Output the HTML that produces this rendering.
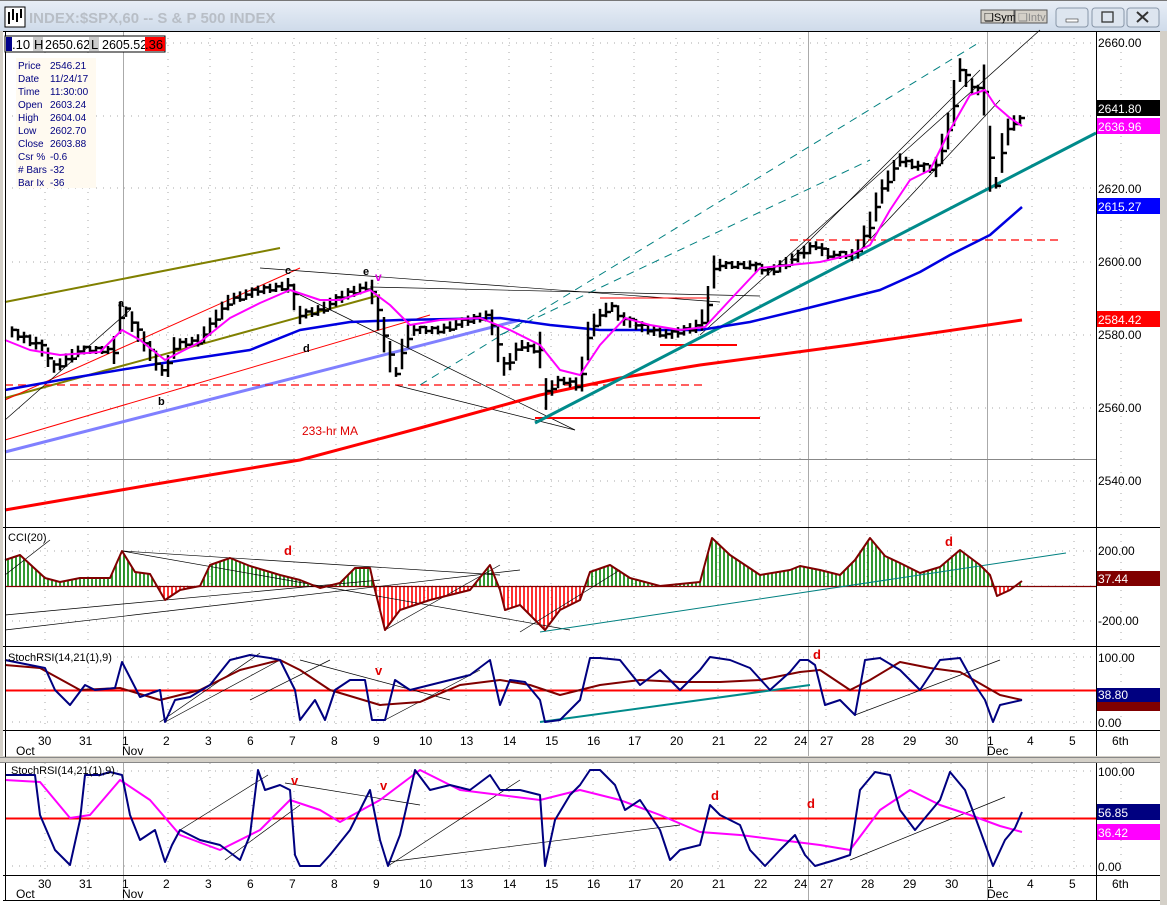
<!DOCTYPE html>
<html><head><meta charset="utf-8"><style>
body{margin:0;width:1167px;height:905px;overflow:hidden;background:#fff;font-family:"Liberation Sans",sans-serif}
svg{position:absolute;left:0;top:0}
</style></head><body>
<svg id="s" width="1167" height="905" xmlns="http://www.w3.org/2000/svg" font-family="Liberation Sans, sans-serif">
<defs><linearGradient id="tb" x1="0" y1="0" x2="0" y2="1"><stop offset="0" stop-color="#e8eef6"/><stop offset="1" stop-color="#cfdbea"/></linearGradient></defs>
<rect width="1167" height="905" fill="#fff"/>
<rect x="0" y="0" width="1167" height="31" fill="url(#tb)"/>
<rect x="0" y="0" width="1167" height="1" fill="#777"/>
<rect x="5" y="7" width="20" height="20" fill="#fff" stroke="#000"/>
<path d="M9 24V12M13 20V9M17 22V13M21 18V9" stroke="#000" stroke-width="2"/>
<text x="29" y="23" font-size="15" font-weight="bold" fill="#b8bec6">INDEX:$SPX,60 -- S &amp; P 500 INDEX</text>
<rect x="981" y="10" width="33" height="13" fill="#d4d0c8" stroke="#555"/><text x="984" y="21" font-size="11">❑Sym</text>
<rect x="1015" y="10" width="32" height="13" fill="#d4d0c8" stroke="#555"/><text x="1018" y="21" font-size="11" fill="#888">❑Intv</text>
<rect x="1056" y="8" width="32" height="19" rx="3" fill="#dde5ef" stroke="#8896a8"/><rect x="1066" y="19" width="12" height="3" fill="#fff" stroke="#333" stroke-width=".6"/>
<rect x="1092" y="8" width="32" height="19" rx="3" fill="#dde5ef" stroke="#8896a8"/><rect x="1102" y="12" width="11" height="10" fill="none" stroke="#333" stroke-width="1.3"/>
<rect x="1127" y="8" width="32" height="19" rx="3" fill="#dde5ef" stroke="#8896a8"/><path d="M1137 12l11 10M1148 12l-11 10" stroke="#333" stroke-width="2"/>
<rect x="1160" y="31" width="7" height="874" fill="#d4d0c8"/>
<rect x="0" y="31" width="3" height="730" fill="#d4d0c8"/>
<g id="grid"></g>
<g id="dr"></g>
<path d="M3 31.5H1160M3 527.5H1160M3 646.5H1160M3 730.5H1160M1096.5 31V757M1096.5 763V900M3 875.5H1160M3 900.5H1160" stroke="#000" stroke-width="1" fill="none"/>
<rect x="0" y="756" width="1167" height="7" fill="#d4d0c8"/>
<path d="M0 757.5H1160M0 762.5H1160" stroke="#888"/>
<path d="M5.5 763V900M5.5 31V757" stroke="#000"/>
<g font-size="13">
<rect x="5" y="36" width="160" height="16" fill="#fff" stroke="#000"/>
<rect x="6" y="37" width="6" height="14" fill="#00008b"/>
<text x="12" y="49">.10</text><rect x="33" y="37" width="10" height="14" fill="#ccc"/><text x="34" y="49">H</text>
<text x="45" y="49" font-size="12.5">2650.62</text><rect x="89" y="37" width="10" height="14" fill="#ccc"/><text x="91" y="49">L</text>
<text x="102" y="49" font-size="12.5">2605.52</text><rect x="145" y="37" width="20" height="14" fill="#f00"/><text x="145" y="49">.36</text>
</g>
<rect x="16" y="58" width="80" height="130" fill="#fffaf0"/>
<g font-size="10" fill="#000080">
<text x="18" y="69">Price</text><text x="50" y="69">2546.21</text>
<text x="18" y="82">Date</text><text x="50" y="82">11/24/17</text>
<text x="18" y="95">Time</text><text x="50" y="95">11:30:00</text>
<text x="18" y="108">Open</text><text x="50" y="108">2603.24</text>
<text x="18" y="121">High</text><text x="50" y="121">2604.04</text>
<text x="18" y="134">Low</text><text x="50" y="134">2602.70</text>
<text x="18" y="147">Close</text><text x="50" y="147">2603.88</text>
<text x="18" y="160">Csr %</text><text x="50" y="160">-0.6</text>
<text x="18" y="173"># Bars</text><text x="50" y="173">-32</text>
<text x="18" y="186">Bar Ix</text><text x="50" y="186">-36</text>
</g>
<g font-size="12">
<text x="1098" y="47">2660.00</text>
<rect x="1097" y="100" width="63" height="16" fill="#000"/><text x="1098" y="113" fill="#fff">2641.80</text>
<rect x="1097" y="118" width="63" height="16" fill="#f0f"/><text x="1098" y="131" fill="#fff">2636.96</text>
<text x="1098" y="193">2620.00</text>
<rect x="1097" y="198" width="63" height="16" fill="#00f"/><text x="1098" y="211" fill="#fff">2615.27</text>
<text x="1098" y="266">2600.00</text>
<rect x="1097" y="311" width="63" height="16" fill="#f00"/><text x="1098" y="324" fill="#fff">2584.42</text>
<text x="1098" y="339">2580.00</text>
<text x="1098" y="412">2560.00</text>
<text x="1098" y="485">2540.00</text>
<text x="1098" y="555">200.00</text>
<rect x="1097" y="571" width="63" height="15" fill="#800000"/><text x="1098" y="583" fill="#fff">37.44</text>
<text x="1098" y="625">-200.00</text>
<text x="1098" y="662">100.00</text>
<rect x="1097" y="688" width="63" height="14" fill="#000080"/><text x="1098" y="699" fill="#fff">38.80</text>
<rect x="1097" y="702" width="63" height="9" fill="#800000"/>
<text x="1098" y="727">0.00</text>
<text x="1098" y="776">100.00</text>
<rect x="1097" y="804" width="63" height="16" fill="#000080"/><text x="1098" y="817" fill="#fff">56.85</text>
<rect x="1097" y="824" width="63" height="16" fill="#f0f"/><text x="1098" y="837" fill="#fff">36.42</text>
<text x="1098" y="871">0.00</text>
</g>
<g font-size="11">
<text x="8" y="541">CCI(20)</text>
<text x="8" y="661">StochRSI(14,21(1),9)</text>
<text x="11" y="774">StochRSI(14,21(1),9)</text>
</g>
<g id="xl" font-size="12"></g>
<g font-size="13" font-weight="bold">
<text x="118" y="307" font-size="11">a</text><text x="158" y="405" font-size="11">b</text><text x="285" y="274" font-size="11">c</text>
<text x="303" y="352" font-size="11">d</text><text x="363" y="275" font-size="11">e</text><text x="375" y="281" fill="#e000e0" font-size="12">v</text>
<text x="284" y="555" fill="#e00000">d</text><text x="945" y="546" fill="#e00000">d</text>
<text x="375" y="675" fill="#e00000">v</text><text x="813" y="659" fill="#e00000">d</text>
<text x="291" y="785" fill="#e00000">v</text><text x="380" y="790" fill="#e00000">v</text>
<text x="711" y="800" fill="#e00000">d</text><text x="807" y="808" fill="#e00000">d</text>
</g>
<text x="302" y="435" font-size="12" fill="#e00000">233-hr MA</text>
</svg>
<script>
var NS="http://www.w3.org/2000/svg",g=document.getElementById('grid'),d=document.getElementById('dr');
function el(p,t,a){var e=document.createElementNS(NS,t);for(var k in a)e.setAttribute(k,a[k]);p.appendChild(e);return e}
function pl(pts,c,w,extra){var a={points:pts.map(function(p){return p.join(',')}).join(' '),fill:'none',stroke:c,'stroke-width':w,'stroke-linejoin':'round'};for(var k in extra)a[k]=extra[k];el(d,'polyline',a)}
function ln(x1,y1,x2,y2,c,w,da){var a={x1:x1,y1:y1,x2:x2,y2:y2,stroke:c,'stroke-width':w};if(da)a['stroke-dasharray']=da;el(d,'line',a)}
function interp(pts,x){if(x<=pts[0][0])return pts[0][1];for(var i=0;i<pts.length-1;i++){if(x>=pts[i][0]&&x<=pts[i+1][0]){var t=(x-pts[i][0])/(pts[i+1][0]-pts[i][0]||1);return pts[i][1]+t*(pts[i+1][1]-pts[i][1])}}return pts[pts.length-1][1]}
var xs=[45,88,168,210,252,294,336,378,425,466,509,551,593,634,676,718,760,800,826,867,909,951,1032,1074,1121];
var hy=[43,116,188,262,335,408,481,551,586,621,657,690,722,771,818,866];
xs.forEach(function(x){[[31,527],[527,646],[646,730],[763,875]].forEach(function(r){el(g,'line',{x1:x,y1:r[0],x2:x,y2:r[1],stroke:'#aaa','stroke-dasharray':'1,6'})})});
hy.forEach(function(y){el(g,'line',{x1:5,y1:y,x2:1096,y2:y,stroke:'#aaa','stroke-dasharray':'1,6'})});
[123,808,987].forEach(function(x){[[31,757],[763,900]].forEach(function(r){el(g,'line',{x1:x+.5,y1:r[0],x2:x+.5,y2:r[1],stroke:'#aaa'})})});
el(g,'line',{x1:5,y1:459.5,x2:1096,y2:459.5,stroke:'#888'});
var lab=[[16,'30','Oct'],[79,'31'],[122,'1','Nov'],[163,'2'],[205,'3'],[247,'6'],[289,'7'],[331,'8'],[373,'9'],[419,'10'],[460,'13'],[503,'14'],[545,'15'],[587,'16'],[628,'17'],[670,'20'],[712,'21'],[754,'22'],[794,'24'],[820,'27'],[861,'28'],[903,'29'],[945,'30'],[987,'1','Dec'],[1027,'4'],[1069,'5'],[1112,'6th']];
var xl=document.getElementById('xl');
[[745,755],[888,898]].forEach(function(b){lab.forEach(function(l){var x=l[0];if(l[2]){el(xl,'text',{x:l[1]=='30'?38:x,y:b[0]}).textContent=l[1];el(xl,'text',{x:x,y:b[1]}).textContent=l[2];}else{el(xl,'text',{x:x,y:b[0]}).textContent=l[1];}})});
var P=[[8,330],[40,345],[55,368],[80,350],[115,350],[122,305],[140,335],[165,375],[175,345],[200,340],[230,300],[260,290],[290,285],[300,315],[320,310],[345,295],[370,285],[380,320],[395,375],[410,330],[440,330],[470,320],[490,315],[505,370],[520,345],[540,350],[545,395],[560,380],[580,385],[590,330],[610,305],[625,320],[650,330],[670,335],[700,325],[710,300],[715,265],[750,265],[770,272],[795,258],[815,245],[830,255],[855,255],[870,225],[880,195],[900,160],[915,165],[935,170],[950,125],[960,70],[975,90],[985,90],[993,200],[1000,160],[1010,125],[1020,120]];
var bp='';for(var x=12;x<=1022;x+=6){var y=interp(P,x),r=Math.abs(interp(P,x+6)-interp(P,x-6))/1.6+8+((x*7)%6);bp+='M'+x+' '+(y-r/2)+'V'+(y+r/2)+'M'+x+' '+(y+((x*3)%7)-3)+'h5';}
ln(5,302,280,248,'#808000',2);ln(5,398,380,295,'#808000',2);ln(5,400,300,268,'#f00',1);ln(5,440,430,315,'#f00',1);
ln(5,452,520,320,'#8080ff',3);ln(420,385,980,42,'#008080',1,'8,6');ln(500,335,870,160,'#008080',1,'8,6');
ln(260,268,720,302,'#000',.7);ln(290,290,575,430,'#000',.7);ln(370,287,760,296,'#000',.7);ln(395,385,575,430,'#000',.7);ln(5,420,130,310,'#000',.7);ln(700,335,1040,30,'#000',.7);ln(790,260,980,70,'#000',.7);ln(860,250,1000,100,'#000',.7);
ln(5,385,705,385,'#f00',1.3,'8,5');ln(790,240,1062,240,'#f00',1.3,'8,5');ln(535,418,760,418,'#f00',2);ln(660,345,737,345,'#f00',2);ln(600,298,710,298,'#f00',1);
pl([[5,510],[150,485],[300,460],[420,428],[540,395],[620,378],[700,365],[850,345],[1022,320]],'#f00',3);
ln(535,423,1096,133,'#008b8b',3);
pl([[5,390],[60,380],[150,365],[250,350],[300,330],[350,322],[400,320],[500,318],[550,325],[600,330],[700,330],[750,322],[800,310],[880,290],[920,272],[950,255],[990,235],[1022,207]],'#0000e0',2.5);
el(d,'path',{d:bp,stroke:'#000','stroke-width':2.5,fill:'none'});
pl([[5,340],[30,350],[60,355],[100,352],[122,330],[140,340],[165,360],[200,342],[230,318],[260,303],[290,290],[320,300],[340,300],[370,290],[390,305],[410,325],[440,320],[480,318],[510,330],[540,345],[560,370],[580,375],[600,345],[625,318],[650,325],[680,330],[705,327],[730,300],[760,268],[790,265],[820,262],[850,255],[870,245],[890,210],[910,180],[930,170],[950,130],[970,95],[985,90],[995,105],[1010,118],[1022,126]],'#f0f',2);
var C=[[5,560],[20,555],[45,578],[60,582],[80,578],[110,578],[122,551],[135,572],[150,574],[165,600],[180,590],[200,586],[210,565],[230,558],[250,566],[280,575],[300,580],[320,588],[340,583],[355,568],[370,568],[375,590],[385,630],[400,610],[430,600],[470,590],[490,565],[500,590],[505,610],[520,605],[545,630],[560,610],[580,600],[590,572],[610,565],[630,578],[660,586],[700,582],[712,538],[730,555],[760,575],[790,570],[800,566],[820,570],[840,575],[855,560],[870,538],[885,556],[900,563],[920,573],[940,567],[960,550],[980,565],[990,575],[997,596],[1010,590],[1022,581]];
var gp='',rp='';for(var x=8;x<=1022;x+=4){var y=interp(C,x);if(y<586)gp+='M'+x+' 586V'+y;else rp+='M'+x+' 586V'+y;}
el(d,'path',{d:gp,stroke:'#008000','stroke-width':1.6});el(d,'path',{d:rp,stroke:'#f00','stroke-width':1.6});
ln(5,586.5,1096,586.5,'#800000',1.2);
ln(5,630,520,570,'#000',.7);ln(5,615,380,580,'#000',.7);ln(122,551,500,575,'#000',.7);ln(122,551,570,630,'#000',.7);ln(385,630,500,565,'#000',.7);ln(520,632,620,570,'#000',.7);ln(5,575,50,540,'#000',.7);ln(540,632,1066,553,'#008080',1);
pl(C,'#800000',2);
ln(5,690.5,1096,690.5,'#f00',2);
ln(160,722,260,653,'#000',.7);ln(165,722,280,660,'#000',.7);ln(250,700,330,660,'#000',.7);ln(385,720,480,670,'#000',.7);ln(540,722,810,685,'#008b8b',2);ln(855,715,1000,660,'#000',.7);ln(300,660,450,700,'#000',.7);
pl([[5,665],[40,668],[80,690],[120,688],[160,700],[200,690],[240,670],[280,660],[300,670],[330,690],[380,705],[420,702],[460,685],[500,680],[530,685],[560,695],[600,685],[640,680],[680,682],[720,682],[760,680],[800,672],[820,670],[850,690],[870,680],[900,662],[930,668],[960,672],[1000,695],[1022,700]],'#800000',2);
pl([[5,660],[45,668],[55,690],[70,705],[85,685],[95,690],[115,688],[122,662],[140,697],[160,690],[165,722],[175,700],[190,697],[210,685],[230,660],[250,655],[270,658],[280,660],[295,690],[300,720],[315,700],[325,720],[335,690],[350,680],[365,680],[372,720],[385,720],[395,680],[410,690],[430,685],[450,680],[470,675],[490,660],[500,705],[510,680],[525,682],[540,700],[545,722],[560,720],[580,700],[590,658],[600,658],[620,660],[640,685],[660,670],[680,690],[700,670],[710,657],[730,660],[750,668],[770,690],[790,672],[800,660],[808,660],[815,665],[825,705],[840,700],[855,715],[865,660],[880,658],[900,670],[920,690],[940,660],[960,658],[975,685],[985,700],[993,722],[1000,705],[1022,700]],'#000080',2);
ln(5,818.5,1096,818.5,'#f00',2);
ln(180,830,268,775,'#000',.7);ln(225,860,300,805,'#000',.7);ln(285,783,420,805,'#000',.7);ln(388,866,520,780,'#000',.7);ln(388,862,680,825,'#000',.7);ln(850,860,1005,797,'#000',.7);
pl([[5,780],[40,782],[70,818],[90,815],[120,780],[150,800],[180,835],[220,850],[260,830],[290,800],[320,810],[340,822],[380,800],[420,770],[460,790],[500,795],[540,800],[580,790],[620,800],[660,815],[700,832],[740,835],[780,840],[820,845],[850,850],[880,810],[910,790],[940,805],[970,815],[1000,826],[1022,832]],'#f0f',2);
pl([[5,775],[35,775],[40,815],[55,850],[70,865],[80,820],[85,775],[100,775],[110,772],[122,775],[130,815],[140,840],[155,830],[165,862],[172,845],[180,830],[200,840],[220,845],[240,860],[250,835],[258,770],[265,790],[280,785],[290,790],[295,855],[300,866],[320,866],[330,855],[350,830],[370,790],[380,840],[388,866],[400,835],[415,770],[430,790],[450,785],[470,790],[490,775],[500,790],[520,790],[540,795],[545,866],[555,820],[570,795],[580,785],[590,770],[600,770],[615,785],[625,810],[640,800],[660,830],[670,860],[680,850],[700,845],[710,805],[720,815],[740,825],[750,850],[765,866],[780,850],[795,835],[805,855],[815,866],[835,860],[850,855],[860,790],[875,772],[890,775],[900,810],[915,830],[940,800],[950,772],[965,790],[980,830],[993,866],[1005,840],[1015,828],[1022,812]],'#000080',2);
</script>
</body></html>
